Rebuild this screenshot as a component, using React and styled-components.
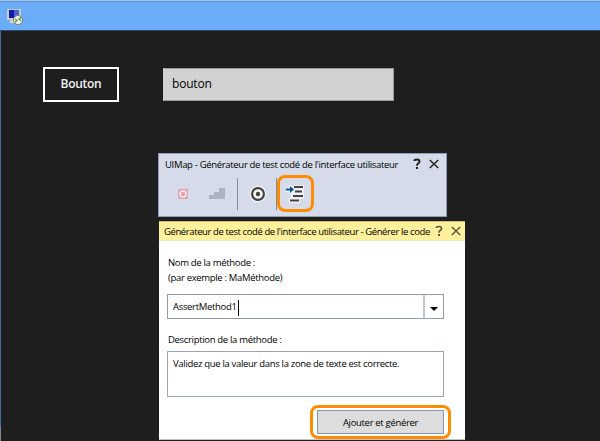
import React from "react";
import styled, { createGlobalStyle } from "styled-components";

const GlobalStyle = createGlobalStyle`
  * { box-sizing: border-box; }
  body { margin: 0; background: #1e1e1e; font-family: "Open Sans", "Noto Sans", sans-serif; color: #000; }
`;

const Desktop = styled.div`
  width: 600px;
  height: 441px;
  overflow: hidden;
  display: flex;
  flex-direction: column;
  background: linear-gradient(#426da6 0 427px, #858585 427px) left / 1px 100% no-repeat #1e1e1e;
`;

const TitleBar = styled.header`
  height: 31px;
  flex: none;
  padding: 7px 0 0 6px;
  background: #6aacf8;
  border-top: 1px solid #a5c2e2;
  border-bottom: 1px solid #304766;
  box-shadow: inset 0 1px #5e98d9;
`;

const Form = styled.section`
  display: flex;
  align-items: center;
  gap: 44px;
  height: 36px;
  flex: none;
  margin: 35px 0 0 43px;
`;

const AppButton = styled.button`
  width: 76px;
  height: 35px;
  padding: 0 0 1px;
  border: 2px solid #fff;
  background: #1e1e1e;
  color: #f2f2f2;
  font: 600 12px "Open Sans", sans-serif;
  letter-spacing: -0.3px;
`;

const AppField = styled.div`
  display: flex;
  align-items: center;
  width: 231px;
  height: 33px;
  padding: 0 0 1px 8px;
  border: 1px solid #999;
  border-left-color: #d2d2d2;
  background: #d2d2d2;
`;

const Windows = styled.main`
  display: flex;
  flex-direction: column;
  gap: 4px;
  margin: 51px 0 0 158px;
`;

const Label = styled.span`
  display: block;
  white-space: nowrap;
  font-size: ${(p) => p.$size || 9.5}px;
  font-weight: 500;
  line-height: 15px;
  letter-spacing: ${(p) => p.$track ?? -0.32}px;
`;

const ToolWindow = styled.section`
  width: 289px;
  height: 64px;
  background: #d6dbe9;
  border: 1px solid #8e9bb0;
`;

const WindowHeader = styled.div`
  display: flex;
  align-items: center;
  height: 20px;
  padding-left: 6px;
`;

const DialogHeader = styled(WindowHeader)`
  padding-left: 5px;
  background: #fff09c;
  border-top: 1px solid #c9be80;
  border-bottom: 1px solid #eee7c3;
`;

const WindowControls = styled.div`
  display: flex;
  gap: 7px;
  margin-left: auto;
  margin-right: ${(p) => p.$right}px;
`;

const Toolbar = styled.div`
  display: flex;
  align-items: center;
  height: 40px;
`;

const Tool = styled.div`
  position: relative;
  display: flex;
  justify-content: center;
  width: ${(p) => p.$width}px;
  padding-left: ${(p) => p.$indent || 0}px;
`;

const Separator = styled.i`
  width: 1px;
  height: 32px;
  background: #858b99;
`;

const Highlight = styled.div`
  position: absolute;
  inset: ${(p) => p.$inset};
  border: 3px solid #ff8c00;
  border-radius: ${(p) => p.$radius}px;
  pointer-events: none;
`;

const Dialog = styled.section`
  width: 306px;
  height: 219px;
  margin-left: 1px;
  background: #fff;
  border-bottom: 1px solid #c5c5c8;
`;

const DialogBody = styled.div`
  display: flex;
  flex-direction: column;
  padding: 14px 21px 0 8px;
`;

const FieldLabel = styled(Label)`
  padding-left: 1px;
`;

const Combo = styled.div`
  display: flex;
  height: 25px;
  margin: 9px 0 13px;
  border: 1px solid #909bad;
`;

const ComboValue = styled.div`
  display: flex;
  align-items: center;
  flex: 1;
  padding-left: 5px;
`;

const Caret = styled.i`
  width: 1px;
  height: 16px;
  margin: 3px 0 0 1px;
  background: #000;
`;

const ComboArrow = styled.div`
  display: flex;
  align-items: center;
  justify-content: center;
  width: 20px;
  padding-top: 3px;
  border-left: 2px solid #c2c6cd;
`;

const Description = styled.div`
  height: 46px;
  margin-top: 4px;
  padding: 4px 5px;
  border: 1px solid #9aa5b6;
`;

const Actions = styled.div`
  position: relative;
  align-self: flex-end;
  margin-top: 13px;
`;

const SubmitButton = styled.button`
  display: flex;
  align-items: center;
  justify-content: center;
  width: 127px;
  height: 24px;
  padding: 0;
  border: 1px solid #8795aa;
  background: #ddd;
  color: #000;
  font-family: inherit;
`;

function RemoteIcon() {
  return (
    <svg width="18" height="18" viewBox="0 0 18 18">
      <path d="M1 1h14v11H1z" fill="#cccbc1" />
      <path d="M3 2h10v8H3z" fill="#1119ad" />
      <path d="M8 2h5v6L8 9z" fill="#647ce0" opacity=".75" />
      <path d="M5 12h6l1 3H3z" fill="#dad7c8" />
      <circle cx="12" cy="12" r="4.5" fill="#f4f4e9" stroke="#777b71" />
      <path d="m9 11 2 1.5-2 1.5m6-4.5-2 1.5 2 1.5" fill="none" stroke="#369b34" strokeWidth="1.3" />
    </svg>
  );
}

function HelpIcon({ color, weight }) {
  return (
    <svg width="10" height="12" viewBox="0 0 10 12">
      <path d="M2.5 3V2.3Q3.4 1.5 5 1.5q2.5 0 2.5 2 0 1.1-1.4 2Q5 6.2 5 7.8" fill="none" stroke={color} strokeWidth={weight} />
      <path d="M4 9h2v2H4z" fill={color} />
    </svg>
  );
}

function CloseIcon({ color }) {
  return (
    <svg width="10" height="12" viewBox="0 0 10 12">
      <path d="m.8 2 8.4 8m0-8L.8 10" fill="none" stroke={color} strokeWidth="1.5" />
    </svg>
  );
}

function RecordIcon() {
  return (
    <svg width="12" height="12" viewBox="0 0 12 12">
      <path d="M1 1h10v10H1z" fill="#e2a5b0" />
      <circle cx="6" cy="6" r="3" fill="#dfa0ad" stroke="#f4e9ef" strokeWidth="1.5" />
    </svg>
  );
}

function StepsIcon() {
  return (
    <svg width="16" height="12" viewBox="0 0 16 12">
      <path d="M0 11V7h5V4h5V0h6v11z" fill="#aeb2be" />
    </svg>
  );
}

function TargetIcon() {
  return (
    <svg width="18" height="18" viewBox="0 0 18 18">
      <circle cx="9" cy="9" r="8.5" fill="#f0f1f5" />
      <circle cx="9" cy="9" r="5.9" fill="#f5f5f8" stroke="#424242" strokeWidth="2.2" />
      <circle cx="9" cy="9" r="2.2" fill="#424242" />
    </svg>
  );
}

function GenerateIcon() {
  return (
    <svg width="18" height="18" viewBox="0 0 18 18">
      <path d="M8 0h10v14h-4v4H3v-5h2V9H3V7H0V2h3V0h2l3 2z" fill="#eff0f5" />
      <path d="M8 2h9M9 6.5h7M7 11h10M4 15.5h9" stroke="#424242" strokeWidth="2" />
      <path d="M0 4.5h6" stroke="#09539c" strokeWidth="2" />
      <path d="M4 1l4 3.5L4 8z" fill="#09539c" />
    </svg>
  );
}

export default function App() {
  return (
    <>
      <GlobalStyle />
      <Desktop>
        <TitleBar><RemoteIcon /></TitleBar>
        <Form>
          <AppButton>Bouton</AppButton>
          <AppField><Label $size={12} $track={-0.2}>bouton</Label></AppField>
        </Form>
        <Windows>
          <ToolWindow>
            <WindowHeader>
              <Label>UIMap - Générateur de test codé de l'interface utilisateur</Label>
              <WindowControls $right={7}>
                <HelpIcon color="#202020" weight={2} />
                <CloseIcon color="#222" />
              </WindowControls>
            </WindowHeader>
            <Toolbar>
              <Tool $width={48}><RecordIcon /></Tool>
              <Tool $width={20}><StepsIcon /></Tool>
              <Tool $width={10} />
              <Separator />
              <Tool $width={38} $indent={2}><TargetIcon /></Tool>
              <Separator />
              <Tool $width={36}>
                <GenerateIcon />
                <Highlight $inset="-10px -1px -9px 0" $radius={8} />
              </Tool>
            </Toolbar>
          </ToolWindow>
          <Dialog>
            <DialogHeader>
              <Label $track={-0.4}>Générateur de test codé de l'interface utilisateur - Générer le code</Label>
              <WindowControls $right={4}>
                <HelpIcon color="#5e5942" weight={1.7} />
                <CloseIcon color="#5e5942" />
              </WindowControls>
            </DialogHeader>
            <DialogBody>
              <FieldLabel>Nom de la méthode :</FieldLabel>
              <FieldLabel>(par exemple : MaMéthode)</FieldLabel>
              <Combo>
                <ComboValue><Label>AssertMethod1</Label><Caret /></ComboValue>
                <ComboArrow>
                  <svg width="8" height="5" viewBox="0 0 8 5"><path d="M0 1h8L4 5z" /></svg>
                </ComboArrow>
              </Combo>
              <FieldLabel>Description de la méthode :</FieldLabel>
              <Description><Label>Validez que la valeur dans la zone de texte est correcte.</Label></Description>
              <Actions>
                <SubmitButton><Label>Ajouter et générer</Label></SubmitButton>
                <Highlight $inset="-5px -7px" $radius={8} />
              </Actions>
            </DialogBody>
          </Dialog>
        </Windows>
      </Desktop>
    </>
  );
}
